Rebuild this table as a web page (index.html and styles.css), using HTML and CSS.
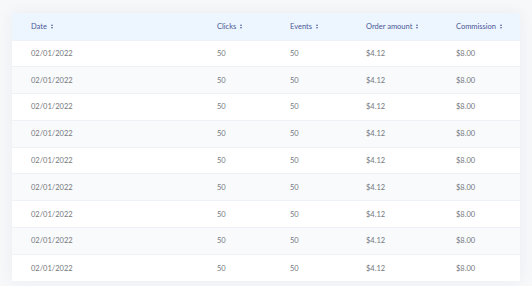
FILE: index.html
```html
<!DOCTYPE html>
<html lang="en">
<head>
  <meta charset="UTF-8" />
  <title>Commission report</title>
  <link rel="stylesheet" href="styles.css">
</head>
<body>
  <div class="card">
    <table class="report">
      <colgroup>
        <col class="c-date" />
        <col class="c-clicks" />
        <col class="c-events" />
        <col class="c-order" />
        <col />
      </colgroup>
      <thead>
        <tr>
          <th>Date <span class="sort"></span></th>
          <th>Clicks <span class="sort"></span></th>
          <th>Events <span class="sort"></span></th>
          <th>Order amount <span class="sort"></span></th>
          <th>Commission <span class="sort"></span></th>
        </tr>
      </thead>
      <tbody id="rows"></tbody>
    </table>
  </div>

  <script>
    const body = document.getElementById('rows');
    for (let i = 0; i < 9; i++) {
      const tr = document.createElement('tr');
      ['02/01/2022', '50', '50', '$4.12', '$8.00'].forEach(v => {
        const td = document.createElement('td');
        td.textContent = v;
        tr.appendChild(td);
      });
      body.appendChild(tr);
    }
  </script>
</body>
</html>
```

FILE: styles.css
```css
* {
  box-sizing: border-box;
  font-family: 'Lato', sans-serif;
}
body {
  margin: 0;
  background: #f7f8fa;
  height: 286px;
  overflow: hidden;
}
.card {
  margin: 13px 12px 0 12px;
  background: #fff;
  box-shadow: 0 0 14px rgba(30, 50, 90, 0.06);
}
.report {
  width: 100%;
  border-collapse: collapse;
  table-layout: fixed;
  font-size: 7.5px;
}
.c-date { width: 205px; }
.c-clicks { width: 73px; }
.c-events { width: 76px; }
.c-order { width: 90px; }
th, td {
  text-align: left;
  padding: 0;
  white-space: nowrap;
}
th:first-child, td:first-child {
  padding-left: 19px;
}
thead tr {
  background: #edf5fe;
  height: 27px;
}
th {
  font-weight: 400;
  color: #4a5896;
}
tbody tr {
  height: 26.8px;
  border-top: 1px solid #eef1f5;
}
tbody tr:nth-child(even) {
  background: #f8fafc;
}
td {
  color: #74777c;
}
.sort {
  display: inline-block;
  position: relative;
  width: 3px;
  height: 5px;
  margin-left: 2px;
  vertical-align: 0;
}
.sort::before, .sort::after {
  content: '';
  position: absolute;
  left: 0;
  border-left: 1.5px solid transparent;
  border-right: 1.5px solid transparent;
}
.sort::before {
  top: 0;
  border-bottom: 2px solid #5a68a0;
}
.sort::after {
  bottom: 0;
  border-top: 2px solid #5a68a0;
}
```
